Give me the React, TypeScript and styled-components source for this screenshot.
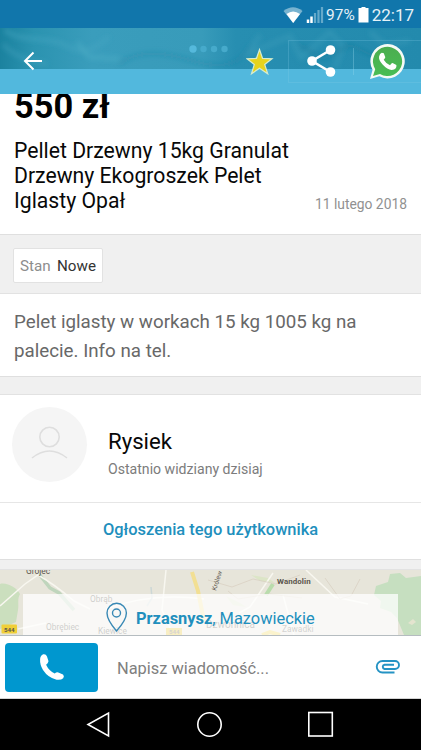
import React from "react";
import styled, { createGlobalStyle } from "styled-components";

const GlobalStyle = createGlobalStyle`
  * { box-sizing: border-box; }
  body { margin: 0; background: #fff; font-family: Roboto, "Liberation Sans", sans-serif; }
`;

const Screen = styled.div`
  width: 421px;
  height: 750px;
  overflow: hidden;
  display: flex;
  flex-direction: column;
  background: #f0f0f0;
`;

const StatusBar = styled.div`
  height: 28px;
  flex: none;
  display: flex;
  align-items: center;
  justify-content: flex-end;
  padding: 2px 7px 0 0;
  background: #1176ab;
  color: #e6f2f8;
`;
const StatusText = styled.span<{ $size: number }>`
  font-size: ${(p) => p.$size}px;
  line-height: 26px;
`;

const AppBar = styled.header`
  position: relative;
  height: 66px;
  flex: none;
  display: flex;
  align-items: center;
  background: #52b8dd;
`;
const CoverArt = styled.svg`
  position: absolute;
  inset: 0;
`;
const Actions = styled.div`
  position: relative;
  width: 100%;
  display: flex;
  align-items: center;
`;
const BackIcon = styled.svg`margin: 0 0 0 22px;`;
const StarIcon = styled.svg`margin: 1px 0 0 202px;`;
const ShareBox = styled.div`
  flex: 1;
  height: 43px;
  margin-left: 12px;
  display: flex;
  align-items: center;
  border: 1px solid rgba(130, 205, 230, 0.25);
  border-right: 0;
`;
const ShareIcon = styled.svg`margin-left: 17px;`;
const BoxDivider = styled.div`
  width: 1px;
  height: 27px;
  margin-left: 17px;
  background: rgba(150, 215, 235, 0.35);
`;
const WhatsAppIcon = styled.svg`margin: -1px 0 0 15px;`;

const Section = styled.section<{ $height: number }>`
  height: ${(p) => p.$height}px;
  flex: none;
  background: #fff;
  border-bottom: 1px solid #dfdfdf;
`;
const Band = styled.div<{ $height: number }>`
  height: ${(p) => p.$height}px;
  flex: none;
  display: flex;
  align-items: center;
  padding: 2px 13px 0;
  background: #f0f0f0;
  border-bottom: 1px solid #e2e2e2;
`;

const Price = styled.div`
  height: 39px;
  padding-left: 14px;
  font-size: 34.4px;
  line-height: 25px;
  font-weight: 700;
  color: #000;
`;
const TitleRow = styled.div`
  display: flex;
  justify-content: space-between;
  align-items: flex-end;
  padding: 6px 14px 0;
`;
const Title = styled.h1`
  margin: 0;
  font-size: 21.2px;
  line-height: 24.8px;
  font-weight: 400;
  color: #080808;
  white-space: nowrap;
`;
const DateText = styled.span`
  font-size: 13.85px;
  line-height: 20px;
  margin-bottom: -1px;
  color: #919191;
  white-space: nowrap;
`;

const Chip = styled.div`
  height: 35px;
  width: 90px;
  display: flex;
  align-items: center;
  justify-content: space-between;
  padding: 2px 6px 0;
  background: #fff;
  border: 1px solid #e2e2e2;
  border-radius: 2px;
  font-size: 15.2px;
  white-space: nowrap;
`;
const ChipLabel = styled.span`color: #8d8d8d;`;
const ChipValue = styled.span`color: #333;`;

const Description = styled.p`
  margin: 0;
  padding: 14px 14px 0;
  font-size: 18.75px;
  line-height: 28.8px;
  color: #686868;
  white-space: nowrap;
`;

const UserRow = styled.div`
  height: 108px;
  display: flex;
  padding: 12px 12px 0;
  border-bottom: 1px solid #e6e6e6;
`;
const Avatar = styled.svg`flex: none;`;
const UserText = styled.div`
  padding: 20px 0 0 20px;
  white-space: nowrap;
`;
const UserName = styled.div`
  font-size: 22.2px;
  line-height: 29px;
  color: #080808;
`;
const LastSeen = styled.div`
  font-size: 14.1px;
  line-height: 20px;
  margin-top: 3px;
  color: #7c7c7c;
`;
const UserLink = styled.div`
  height: 57px;
  line-height: 53px;
  text-align: center;
  font-size: 16.45px;
  font-weight: 500;
  color: #218fbd;
  white-space: nowrap;
`;

const MapArea = styled.div`
  position: relative;
  height: 65px;
  flex: none;
  padding: 24px 23px 0;
  background: #e9e8dc;
  overflow: hidden;
`;
const MapArt = styled.svg`
  position: absolute;
  inset: 0;
`;
const LocationCard = styled.div`
  position: relative;
  height: 41px;
  display: flex;
  padding-left: 83px;
  background: rgba(255, 255, 255, 0.74);
`;
const PinIcon = styled.svg`margin-top: 8px;`;
const LocationText = styled.div`
  margin: 12px 0 0 8px;
  font-size: 16.4px;
  line-height: 26px;
  color: #218fbd;
  white-space: nowrap;
`;

const MessageBar = styled.div`
  height: 64px;
  flex: none;
  display: flex;
  align-items: center;
  padding: 0 20px 0 5px;
  background: #fff;
  border-top: 1px solid #b5bcc0;
  border-bottom: 1px solid #d5d5d5;
`;
const CallButton = styled.button`
  width: 93px;
  height: 49px;
  display: flex;
  align-items: center;
  justify-content: center;
  border: 0;
  padding: 0;
  border-radius: 4px;
  background: #0097cf;
`;
const Placeholder = styled.span`
  flex: 1;
  padding: 2px 0 0 19px;
  font-size: 16.4px;
  color: #808080;
`;

const NavBar = styled.nav`
  flex: 1;
  display: flex;
  justify-content: center;
  padding: 11px 2px 0 0;
  background: #000;
`;
const NavIcon = styled.svg`
  flex: none;
  & + & { margin-left: 84px; }
`;

function Cover() {
  return (
    <CoverArt width="421" height="66" viewBox="0 0 421 66">
      <defs>
        <linearGradient id="cover" x1="0" x2="1">
          <stop offset="0" stopColor="#1b829f" />
          <stop offset="0.08" stopColor="#2b93b0" />
          <stop offset="0.22" stopColor="#3a9dbc" />
          <stop offset="0.48" stopColor="#389bba" />
          <stop offset="0.56" stopColor="#278eb1" />
          <stop offset="1" stopColor="#238aad" />
        </linearGradient>
        <filter id="soft"><feGaussianBlur stdDeviation="2.4" /></filter>
        <clipPath id="photo"><rect width="421" height="41" /></clipPath>
      </defs>
      <rect width="421" height="41" fill="url(#cover)" />
      <g clipPath="url(#photo)">
        <g filter="url(#soft)" fill="none" strokeWidth="4">
          <path d="M5 2C20 15 48 8 65 17S90 25 109 9" stroke="#48a8c3" opacity=".5" />
          <path d="M77 14L89 29L120 31" stroke="#56b3cb" opacity=".4" />
          <path d="M3 16Q15 31 47 36" stroke="#48a8c3" opacity=".4" />
          <path d="M119 36Q143 17 190 32T250 17" stroke="#237f9f" opacity=".3" />
          <path d="M260 7L248 26L290 8L301 30L330 4L343 19L335 40M370 4L385 17L410 13" stroke="#4ba7c0" opacity=".35" />
          <path d="M300 17L323 31L350 17L382 32" stroke="#197795" opacity=".4" />
        </g>
      </g>
      <circle cx="193" cy="21" r="3.7" fill="#55b9dc" />
      <circle cx="203.5" cy="21" r="3.2" fill="#46aacb" />
      <circle cx="214" cy="21" r="3.2" fill="#46aacb" />
      <circle cx="224.5" cy="21" r="3.2" fill="#46aacb" />
    </CoverArt>
  );
}

function MapDrawing() {
  return (
    <MapArt width="421" height="65" viewBox="0 0 421 65" fontFamily="Roboto, sans-serif">
      <rect width="421" height="65" fill="#e7e5da" />
      <path d="M0 14C7 12 17 18 20 24C17 29 19 34 18 40L16 52L0 59Z" fill="#cbdfbe" />
      <path d="M421 6L406 8L400 3L390 4L388 12L376 16L374 25L381 31L380 38L391 42L397 48L404 65H421Z" fill="#c6dfc0" />
      <path d="M408 53l5-4 3 3-4 3z" fill="#e4e4cf" />
      <path d="M226 26l14 7 6 4-13-2zM251 5l17 3 7 5-15-2z" fill="#dce5c7" />
      <path d="M39 4L50 18L59 23L74 40" stroke="#bfd5bc" strokeWidth="3.5" fill="none" />
      <g fill="none" stroke="#f8f7f0" strokeWidth="1.5">
        <path d="M0 36L25 14L38 5Q54 14 74 31L90 39M166 0L162 40L173 65M273 3L250 37L239 43M306 0L335 27L368 34M283 25L294 65M106 39Q151 22 204 29M18 59L46 53" />
      </g>
      <path d="M273 14L266 25" stroke="#b9dcac" strokeWidth="4" />
      <g fill="none" stroke="#d9d1c3" strokeWidth="0.8">
        <path d="M208 10L232 17L253 9L276 14L300 5M325 8L340 29L351 26L360 9M228 21L238 29L269 24L302 28" />
      </g>
      <path d="M192 2L198 21L204 51" fill="none" stroke="#f2df93" strokeWidth="4" />
      <path d="M151 17L152 28L147 36" fill="none" stroke="#ccd7d6" strokeWidth="1.5" />
      <rect x="1.500" y="54.500" width="15.500" height="9" rx="1" fill="#f0cf38" />
      <rect x="166" y="58" width="16" height="7" fill="#e5bd19" />
      <path d="M262 65l8-3 10 3" stroke="#eed040" strokeWidth="4" fill="none" />
      <g fontSize="8.4" fill="#5c564d">
        <text x="26" y="4" fontSize="8.4">Grójec</text>
        <text x="277" y="13.500" fontSize="7.900" fontWeight="700" letterSpacing=".1">Wandolin</text>
        <text x="90" y="32" fill="#45423b">Obrąb</text>
        <text x="46" y="60" fill="#45423b">Obrębiec</text>
        <text x="98" y="64" fill="#45423b">Kiewice</text>
        <text x="206" y="57.500" fontSize="10" fill="#55524d">Dzwonnica</text>
        <text x="282" y="61.500" fill="#55524d">Zawadki</text>
        <text x="0" y="0" transform="translate(216 21) rotate(-72)" fontSize="6.600">Królew</text>
        <text x="4" y="61.500" fontSize="6.200" fontWeight="700">544</text>
        <text x="169" y="64" fontSize="6.200" fontWeight="700">544</text>
      </g>
    </MapArt>
  );
}

export default function App() {
  return (
    <Screen>
      <GlobalStyle />
      <StatusBar>
        <svg width="43" height="20" viewBox="0 0 43 20">
          <path d="M.500 6Q10 -1.500 19.500 6L10.200 18Z" fill="#78b3d0" />
          <path d="M3.500 9Q10 4 17 9L10.200 18Z" fill="#fff" />
          <path d="M25 14.500v3.500M28.500 11.500v6.500" stroke="#fff" strokeWidth="2.500" />
          <path d="M32 8v10M35.500 5v13M39 2v16" stroke="#65a9ca" strokeWidth="2.200" />
        </svg>
        <StatusText $size={15.4}>97%</StatusText>
        <svg width="17" height="20" viewBox="0 0 17 20">
          <path d="M6.500 2h4v1h3v14.500h-10V3h3z" fill="#fff" />
        </svg>
        <StatusText $size={17}>22:17</StatusText>
      </StatusBar>
      <AppBar>
        <Cover />
        <Actions>
          <BackIcon width="22" height="20" viewBox="0 0 22 20" fill="none" stroke="#fff" strokeWidth="2">
            <path d="M20 10H3M11.500 1.500L3 10L11.500 18.500" />
          </BackIcon>
          <StarIcon width="30" height="30" viewBox="0 0 30 30">
            <path d="M13.500 2.500L16.500 11.300L26 11.800L18.700 17.500L21.700 26.800L13.500 21.300L5.500 26.800L8.300 17.500L1 11.800L10.500 11.300Z" fill="#e6d31d" stroke="#d5ebcf" strokeWidth="1.200" />
          </StarIcon>
          <ShareBox>
            <ShareIcon width="30" height="34" viewBox="0 0 30 34" fill="#fff">
              <path d="M24.500 6L6 17L24.500 28" stroke="#fff" strokeWidth="2.600" fill="none" />
              <circle cx="24.500" cy="6" r="4.800" />
              <circle cx="6" cy="17" r="4.800" />
              <circle cx="24.500" cy="28" r="4.800" />
            </ShareIcon>
            <BoxDivider />
            <WhatsAppIcon width="37" height="38" viewBox="0 0 37 38">
              <defs>
                <linearGradient id="wa" x1="0" x2="0" y1="0" y2="1">
                  <stop stopColor="#4bad50" />
                  <stop offset="1" stopColor="#49bd54" />
                </linearGradient>
              </defs>
              <path d="M1 37L3.600 27.700A17.200 17.200 0 1 1 10.300 34.300Z" fill="#f5faf5" />
              <path d="M4 34L6.200 27.200A14.600 14.600 0 1 1 11 31.900Z" fill="url(#wa)" />
              <path d="M12.800 10.800L14.800 11.300L16.300 15.300Q16.300 16.200 14.700 17.700Q17 21.700 21 23.200Q22.800 20.900 23.600 21.100L27.400 23Q28 27.500 22.800 27.900Q18.500 28 13.600 22.600Q9.400 18 10.100 14.500Q10.700 11.300 12.800 10.800Z" fill="#fff" />
            </WhatsAppIcon>
          </ShareBox>
        </Actions>
      </AppBar>

      <Section $height={141}>
        <Price>550 zł</Price>
        <TitleRow>
          <Title>
            Pellet Drzewny 15kg Granulat<br />Drzewny Ekogroszek Pelet<br />Iglasty Opał
          </Title>
          <DateText>11 lutego 2018</DateText>
        </TitleRow>
      </Section>
      <Band $height={59}>
        <Chip>
          <ChipLabel>Stan</ChipLabel>
          <ChipValue>Nowe</ChipValue>
        </Chip>
      </Band>
      <Section $height={83}>
        <Description>
          Pelet iglasty w workach 15 kg 1005 kg na<br />palecie. Info na tel.
        </Description>
      </Section>
      <Band $height={18} />
      <Section $height={165}>
        <UserRow>
          <Avatar width="76" height="76" viewBox="0 0 76 76" fill="none" stroke="#dedede" strokeWidth="1.600">
            <circle cx="37.500" cy="37.500" r="37.500" fill="#f5f5f5" stroke="none" />
            <circle cx="37.500" cy="30" r="9.700" />
            <path d="M20 51Q37.500 37 55 51" />
          </Avatar>
          <UserText>
            <UserName>Rysiek</UserName>
            <LastSeen>Ostatnio widziany dzisiaj</LastSeen>
          </UserText>
        </UserRow>
        <UserLink>Ogłoszenia tego użytkownika</UserLink>
      </Section>
      <Band $height={10} />
      <MapArea>
        <MapDrawing />
        <LocationCard>
          <PinIcon width="22" height="31" viewBox="0 0 22 31" fill="none" stroke="#3989b5" strokeWidth="1.400">
            <path d="M10.500 29Q1 18 1 11A9.700 9.700 0 0 1 20.400 11Q20.400 18 10.500 29Z" />
            <circle cx="10.500" cy="11" r="4" />
          </PinIcon>
          <LocationText><b>Przasnysz</b>, Mazowieckie</LocationText>
        </LocationCard>
      </MapArea>
      <MessageBar>
        <CallButton aria-label="Zadzwoń">
          <svg width="26" height="28" viewBox="0 0 26 28">
            <path d="M4.200 1.300Q7 .8 8 3.500L9.500 8.200Q9 10.200 7.100 11.700Q9.800 17.600 15.700 20.500Q17.500 18.900 19.300 19.400L24 21.600Q25.700 23.300 24.200 25.200Q22 27.300 17.600 26.700Q9.200 24.900 4 17Q.7 11.600 1.100 6Q1.500 2.300 4.200 1.300Z" fill="#fff" />
          </svg>
        </CallButton>
        <Placeholder>Napisz wiadomość...</Placeholder>
        <svg width="26" height="16" viewBox="0 0 26 16" fill="none" stroke="#2593c4" strokeWidth="1.900">
          <path d="M19.500 13.500H7.500A5.750 5.750 0 0 1 7.500 2H20A4 4 0 0 1 20 10H9.500A2.200 2.200 0 0 1 9.500 5.700H19" />
        </svg>
      </MessageBar>
      <NavBar>
        <NavIcon width="27" height="28" viewBox="0 0 27 28" fill="none" stroke="#fff" strokeWidth="1.600">
          <path d="M23.500 3V26L3 14.500Z" />
        </NavIcon>
        <NavIcon width="27" height="28" viewBox="0 0 27 28" fill="none" stroke="#fff" strokeWidth="1.600">
          <circle cx="13.500" cy="14.500" r="11.700" />
        </NavIcon>
        <NavIcon width="27" height="28" viewBox="0 0 27 28" fill="none" stroke="#fff" strokeWidth="1.600">
          <rect x="1.800" y="2.500" width="23.500" height="23.500" />
        </NavIcon>
      </NavBar>
    </Screen>
  );
}
